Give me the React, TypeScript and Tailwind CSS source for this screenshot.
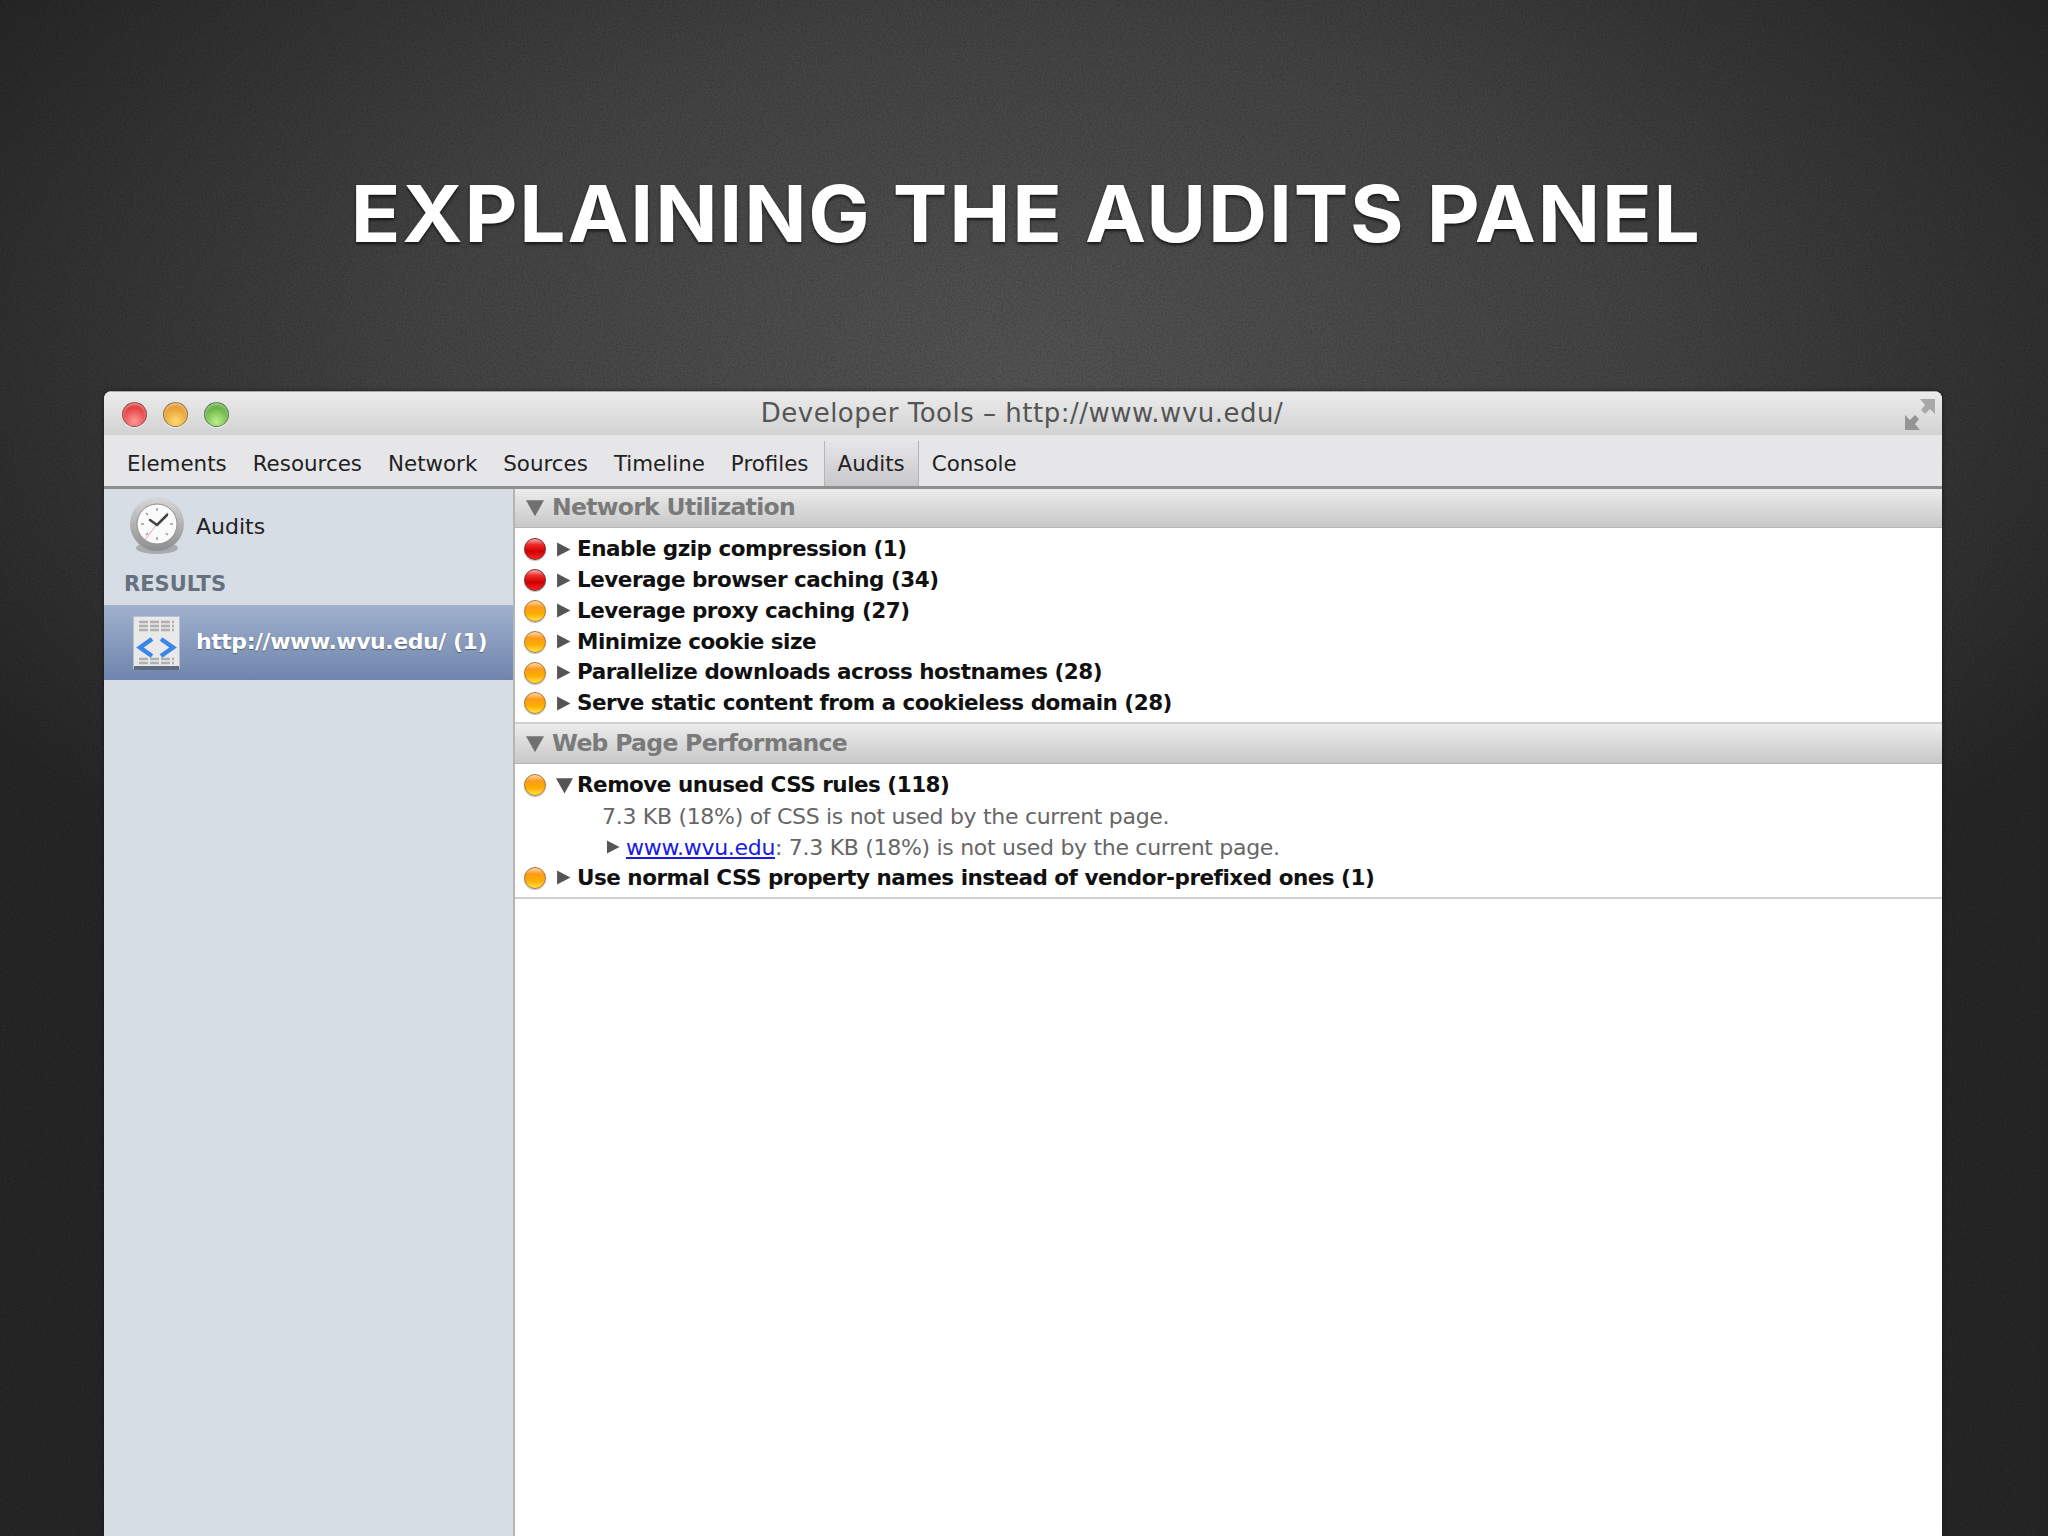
import React from "react";

const ui = "font-['DejaVu_Sans',sans-serif]";

function Tri({ down, color = "#555", size = 15 }: { down?: boolean; color?: string; size?: number }) {
  return (
    <svg width={size} height={size} viewBox="0 0 14 14" className="shrink-0">
      {down ? <path d="M0 1 H14 L7 13.5 Z" fill={color} /> : <path d="M1 0.5 L13.5 7 L1 13.5 Z" fill={color} />}
    </svg>
  );
}

function Light({ className }: { className: string }) {
  return <span className={`block w-[25px] h-[25px] rounded-full border border-[#555]/60 shadow-[0_1px_1px_rgba(255,255,255,.7),inset_0_2px_3px_rgba(255,255,255,.45)] ${className}`} />;
}

function Ball({ red }: { red?: boolean }) {
  return (
    <span
      className={`block w-[22px] h-[22px] rounded-full shrink-0 border-[1.5px] shadow-[0_1px_1px_rgba(0,0,0,.25)] ${
        red
          ? "border-[#7a2a2a] bg-[linear-gradient(#f7b0b0_0%,#ee2a2a_28%,#cf0000_62%,#ff2424_100%)]"
          : "border-[#a87a3a] bg-[linear-gradient(#fcd9a8_0%,#fb9a1c_30%,#fdae00_65%,#ffe24a_100%)]"
      }`}
    />
  );
}

function Row({ red, open, text }: { red?: boolean; open?: boolean; text: string }) {
  return (
    <div className="h-[30.8px] flex items-center pl-[9px]">
      <Ball red={red} />
      <span className="ml-[10px] w-[21px] shrink-0 flex items-center">
        <Tri down={open} size={open ? 17 : 15} />
      </span>
      <span className="font-bold text-[#111] text-[21.5px] tracking-[-0.5px] whitespace-nowrap">{text}</span>
    </div>
  );
}

function Section({ title, h }: { title: string; h: string }) {
  return (
    <div className={`${h} flex items-center pl-[11px] bg-[linear-gradient(#ececec,#c8c8c8)] border-b border-[#b5b5b5]`}>
      <Tri down color="#707070" size={18} />
      <span className="ml-[8px] font-bold text-[#7a7a7a] text-[23.5px] tracking-[-0.7px] whitespace-nowrap">{title}</span>
    </div>
  );
}

export default function App() {
  return (
    <div className={`relative h-[1536px] overflow-hidden bg-[radial-gradient(ellipse_60%_44%_at_50%_24%,#535353_0%,#434343_50%,#262626_100%)] ${ui}`}>
      <svg className="absolute inset-0 pointer-events-none" width="2048" height="1536" aria-hidden="true">
        <filter id="grain">
          <feTurbulence type="fractalNoise" baseFrequency="0.55" numOctaves="3" seed="4" />
          <feColorMatrix type="matrix" values="0 0 0 0 0  0 0 0 0 0  0 0 0 0 0  0 0 0 -1.2 0.75" />
        </filter>
        <rect width="2048" height="1536" filter="url(#grain)" opacity="0.3" />
      </svg>
      <h1 className="relative pt-[163px] pl-[334px] h-[391px] font-['Inter',sans-serif] font-bold text-[78px] leading-[102px] tracking-[1.7px] text-white whitespace-nowrap origin-left scale-x-[1.05] [text-shadow:0_2px_3px_rgba(0,0,0,.7)]">
        EXPLAINING THE AUDITS PANEL
      </h1>
      <div className="relative ml-[104px] w-[1838px] h-[1145px] rounded-t-[8px] overflow-hidden flex flex-col bg-white shadow-[0_0_4px_rgba(0,0,0,.5)]">
        <div className="relative h-[44px] shrink-0 flex items-center justify-center bg-[linear-gradient(#ececec,#d2d2d2)] border-t border-[#a8a8a8]">
          <div className="absolute left-[18px] top-[10px] flex gap-[16px]">
            <Light className="bg-[radial-gradient(circle_at_50%_80%,#ff9a9a,#e03434_72%)]" />
            <Light className="bg-[radial-gradient(circle_at_50%_80%,#ffdc70,#e4962c_72%)]" />
            <Light className="bg-[radial-gradient(circle_at_50%_80%,#bdf088,#5cab3c_72%)]" />
          </div>
          <span className="text-[26px] text-[#555] tracking-[0.5px] -translate-x-[1px]">Developer Tools – http://www.wvu.edu/</span>
          <svg className="absolute right-[6px] top-[7px]" width="31" height="32" viewBox="0 0 31 32">
            <path d="M15 0 H30 V15 L25 10 L20 15 L16 11 L20 6 Z" fill="#a8a8a8" />
            <path d="M0 16 L5 21 L10 16 L14 20 L10 25 L15 31 H0 Z" fill="#949494" />
          </svg>
        </div>
        <div className="h-[54px] shrink-0 flex items-stretch pl-[10px] bg-[#e6e6e8] border-b-[3px] border-[#8e8e8e] text-[21.4px] text-[#222]">
          {["Elements", "Resources", "Network", "Sources", "Timeline", "Profiles"].map((t) => (
            <div key={t} className="px-[13px] pt-[8px] flex items-center">{t}</div>
          ))}
          <div className="ml-[2px] px-[13px] mt-[6px] pt-[2px] flex items-center bg-[linear-gradient(#e6e6e8,#c8c8ca)] border-x border-[#b5b5b5]">Audits</div>
          <div className="px-[13px] pt-[8px] flex items-center">Console</div>
        </div>
        <div className="flex-1 flex min-h-0">
          <div className="w-[409px] shrink-0 bg-[#d6dde5]">
            <div className="h-[74px] flex items-center pl-[24px]">
              <svg width="58" height="60" viewBox="0 0 58 60">
                <defs>
                  <linearGradient id="rim" x1="0" y1="0" x2="0" y2="1">
                    <stop offset="0" stopColor="#d8d8d8" />
                    <stop offset="1" stopColor="#8d8d8d" />
                  </linearGradient>
                </defs>
                <ellipse cx="29" cy="52" rx="21" ry="6" fill="#8f8f8f" opacity=".65" />
                <circle cx="29" cy="28" r="27" fill="url(#rim)" />
                <circle cx="29" cy="28" r="20" fill="#fafafa" stroke="#8f8f8f" />
                <path d="M29 12 V15 M29 41 V44 M13 28 H16 M42 28 H45 M18 17 L20 19 M38 37 L40 39 M40 17 L38 19 M20 37 L18 39" stroke="#999" strokeWidth="1.5" />
                <path d="M17 44 L29 28" stroke="#e8a8a8" strokeWidth="1" />
                <path d="M29 29 L22 24 M29 29 L39 19" stroke="#444" strokeWidth="2.5" strokeLinecap="round" />
              </svg>
              <span className="ml-[10px] text-[22px] text-[#222]">Audits</span>
            </div>
            <div className="h-[41px] pl-[20px] pt-[2px] flex items-center font-bold text-[21px] text-[#66717f]">RESULTS</div>
            <div className="mt-[1px] h-[75px] pb-[3px] flex items-center pl-[29px] bg-[linear-gradient(#a0b1cd,#6f85ad)]">
              <svg width="47" height="54" viewBox="0 0 47 54" className="shrink-0 translate-y-[2px]">
                <rect x="0.5" y="0.5" width="46" height="52" fill="#e9e9e9" stroke="#b8c0cc" />
                <rect x="1" y="50" width="45" height="4" fill="#5f6b80" />
                <path d="M6 6 H41 M6 10 H41 M6 14 H41 M6 43 H41 M6 47 H41" stroke="#b0b0b0" strokeWidth="2.5" strokeDasharray="9 2" />
                <path d="M19 23 L7 31.5 L19 40 M28 23 L40 31.5 L28 40" fill="none" stroke="#3a86e8" strokeWidth="4.5" />
              </svg>
              <span className="ml-[16px] font-bold text-[22px] text-white tracking-[-0.45px] whitespace-nowrap [text-shadow:0_1px_1px_rgba(0,0,0,.4)]">http://www.wvu.edu/ (1)</span>
            </div>
          </div>
          <div className="flex-1 min-w-0 border-l-[2px] border-[#b5b5b5] bg-white">
            <Section title="Network Utilization" h="h-[39px]" />
            <div className="h-[196px] pt-[6px] border-b-[2px] border-[#cfcfcf]">
              <Row red text="Enable gzip compression (1)" />
              <Row red text="Leverage browser caching (34)" />
              <Row text="Leverage proxy caching (27)" />
              <Row text="Minimize cookie size" />
              <Row text="Parallelize downloads across hostnames (28)" />
              <Row text="Serve static content from a cookieless domain (28)" />
            </div>
            <Section title="Web Page Performance" h="h-[40px]" />
            <div className="h-[135px] pt-[6px] border-b-[2px] border-[#cfcfcf]">
              <Row open text="Remove unused CSS rules (118)" />
              <div className="h-[30.8px] flex items-center pl-[87px] text-[22px] tracking-[-0.3px] text-[#666] whitespace-nowrap">7.3 KB (18%) of CSS is not used by the current page.</div>
              <div className="h-[30.8px] flex items-center pl-[91px] text-[22px] tracking-[-0.3px] text-[#666] whitespace-nowrap">
                <span className="w-[20px] shrink-0 flex items-center"><Tri size={14} /></span>
                <span className="text-[#1a1ae0] underline">www.wvu.edu</span>: 7.3 KB (18%) is not used by the current page.
              </div>
              <Row text="Use normal CSS property names instead of vendor-prefixed ones (1)" />
            </div>
          </div>
        </div>
      </div>
    </div>
  );
}
